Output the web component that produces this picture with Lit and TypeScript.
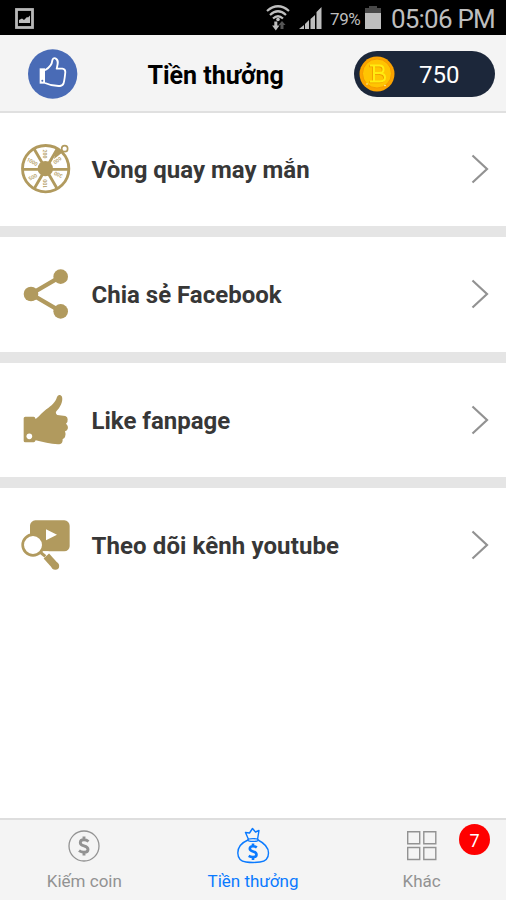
import { LitElement, html, svg, css } from "lit";
import { customElement } from "lit/decorators.js";

const GOLD = "#b19a5e";

const wheelIcon = html`<svg class="pic" viewBox="0 -1 240 240">
  <circle cx="107" cy="118" r="69.500" fill="none" stroke=${GOLD} stroke-width="8.500" />
  <path d="M37 120H176M72 58l70 121M142 58L72 179" stroke=${GOLD} stroke-width="8.500" />
  <circle cx="106" cy="118" r="23" fill=${GOLD} />
  <path d="M132 89l6-29 20 9z" fill=${GOLD} />
  <path d="M144 71l13-6" stroke=${GOLD} stroke-width="7" />
  <circle cx="164" cy="58" r="9" fill="#fff" stroke=${GOLD} stroke-width="5" />
  <g fill=${GOLD} font-family="Roboto, sans-serif" font-size="15.500" font-weight="500" text-anchor="middle">
    ${[
      ["200", 99, 74, 90],
      ["600", 139, 89, -215],
      ["300", 147, 131, 205],
      ["100", 112, 163, -90],
      ["500", 71, 148, -30],
      ["1000", 64, 102, 30],
    ].map(([t, x, y, r]) => svg`<text transform="translate(${x} ${y}) rotate(${r})">${t}</text>`)}
  </g>
</svg>`;

const shareIcon = html`<svg class="pic" viewBox="0 -1 240 240">
  <path d="M152 67L63 119l89 52" fill="none" stroke=${GOLD} stroke-width="13" />
  <g fill=${GOLD}>
    <circle cx="152" cy="67" r="22" />
    <circle cx="63" cy="119" r="22" />
    <circle cx="152" cy="171" r="22" />
  </g>
</svg>`;

const likeIcon = html`<svg class="pic" viewBox="0 0 240 240">
  <path
    fill=${GOLD}
    d="M46 110H71Q75 110 77 117C90 107 98 96 109 88C125 77 136 67 141 51C144 43 152 43 156 50C160 65 150 82 139 94C136 98 138 103 142 105L166 108Q173 110 173 118Q174 126 168 131Q176 138 173 147Q171 152 165 154Q169 164 165 171Q163 175 158 177Q159 191 148 193C124 194 99 186 77 181Q75 187 71 187H46Q41 187 41 182V115Q41 110 46 110Z"
  />
  <circle cx="58" cy="169" r="8.500" fill="#fff" />
</svg>`;

const watchIcon = html`<svg class="pic" viewBox="0 -1 240 240">
  <rect x="60" y="45" width="119" height="93" rx="16" fill=${GOLD} />
  <path d="M108 72v33l33-17z" fill="#fff" />
  <path d="M96 138h20v5h-20z" fill="#fff" />
  <path d="M109 152L136 182" stroke=${GOLD} stroke-width="22" />
  <circle cx="136" cy="182" r="11.500" fill=${GOLD} />
  <path d="M90 140l16 13" stroke=${GOLD} stroke-width="9" />
  <circle cx="69" cy="119" r="31" fill="#fff" stroke=${GOLD} stroke-width="8" />
</svg>`;

const ROWS = [
  { label: "Vòng quay may mắn", icon: wheelIcon },
  { label: "Chia sẻ Facebook", icon: shareIcon },
  { label: "Like fanpage", icon: likeIcon },
  { label: "Theo dõi kênh youtube", icon: watchIcon },
];

@customElement("app-root")
export class AppRoot extends LitElement {
  static styles = css`
    :host {
      display: flex;
      flex-direction: column;
      height: 900px;
      background: #fff;
      font-family: Roboto, sans-serif;
      overflow: hidden;
    }
    * { box-sizing: border-box; }
    svg { display: block; flex: none; }
    .status {
      height: 35px;
      flex: none;
      background: #000;
      color: #bebebe;
      display: flex;
      align-items: center;
    }
    .shot { margin-left: 15px; margin-top: 2px; }
    .wifi { margin-left: auto; }
    .signal { margin-left: 9px; }
    .pct { font-size: 17px; width: 31px; margin-left: 8px; margin-top: 3px; letter-spacing: -0.4px; white-space: nowrap; }
    .battery { margin-left: 4px; }
    .clock { font-size: 26px; line-height: 35px; width: 105px; margin-left: 10px; margin-right: 10px; margin-top: 4px; letter-spacing: -0.8px; white-space: nowrap; }
    .head {
      height: 78px;
      flex: none;
      background: #f4f4f4;
      border-bottom: 2px solid #e0e0e0;
      display: flex;
      align-items: center;
    }
    .thumb { margin-left: 28px; margin-top: 1px; }
    .title { margin: 5px 0 0 69.500px; width: 140px; font-size: 25px; font-weight: 700; color: #000; white-space: nowrap; }
    .pill {
      margin: 2px 11px 0 auto;
      width: 141px;
      height: 46px;
      border-radius: 23px;
      background: #1c273a;
      color: #fff;
      display: flex;
      align-items: center;
      padding-left: 5px;
      font-size: 24px;
    }
    .amount { margin-left: 24px; margin-top: 2px; }
    .list { flex: 1; }
    .row { height: 113.300px; display: flex; align-items: center; padding-left: 10px; }
    .row:first-child { padding-bottom: 1.300px; }
    .row + .row { border-top: 11.500px solid #e5e5e5; height: 125.300px; }
    .pic { width: 80px; height: 80px; }
    .label { margin: 2px 0 0 1.500px; flex: 1; font-size: 24px; font-weight: 700; color: #373737; white-space: nowrap; }
    .row:last-child .label { letter-spacing: 0.1px; }
    .chev { margin-right: 17px; }
    .tabs {
      height: 82px;
      flex: none;
      background: #f4f4f4;
      border-top: 2px solid #dedede;
      display: grid;
      grid-template-columns: 1fr 1fr 1fr;
      color: #929292;
      font-size: 17px;
    }
    .tab { display: flex; flex-direction: column; align-items: center; position: relative; padding-top: 6px; }
    .tab span { line-height: 20px; margin-top: 5px; white-space: nowrap; }
    .on { color: #0a7aff; }
    .badge {
      position: absolute;
      top: 4px;
      right: 16px;
      width: 31px;
      height: 31px;
      border-radius: 50%;
      background: #fe0000;
      color: #fff;
      font-size: 18px;
      line-height: 33px;
      text-align: center;
    }
  `;

  render() {
    return html`
      <div class="status">
        <svg class="shot" width="19" height="21" viewBox="0 0 19 21">
          <rect x="1.500" y="1.500" width="16" height="18" fill="none" stroke="#b8b8b8" stroke-width="2.800" />
          <path d="M4 15v-3l3-1.500 2 1.500 3-3 1 .5 2-2v7.500z" fill="#bebebe" />
        </svg>
        <svg class="wifi" width="24" height="28" viewBox="0 0 24 28">
          <g fill="none" stroke="#bebebe" stroke-width="2.200">
            <path d="M1 7Q12-2.500 23 7M4 11Q12 3.500 20 11M7 14.500Q12 10 17 14.500" />
          </g>
          <circle cx="12" cy="15.500" r="1.800" fill="#bebebe" />
          <path d="M8.300 17.500h3v4H13.500l-3.700 5-3.700-5h2.200z" fill="#bebebe" />
          <path d="M14.500 25h3v-4h2l-3.500-4-3.500 4h2z" fill="#555" />
        </svg>
        <svg class="signal" width="23" height="23" viewBox="0 0 23 23">
          <path d="M0 23l5-4v4zM6 23v-5l4-4v9zM11.500 23v-10l4.500-4v14zM17.500 23V6L22.500 1v22z" fill="#bebebe" />
        </svg>
        <div class="pct">79%</div>
        <svg class="battery" width="16" height="23" viewBox="0 0 16 23">
          <path d="M4 0h8v2h4v5H0V2h4z" fill="#484848" />
          <path d="M0 7h16v16H0z" fill="#bebebe" />
        </svg>
        <div class="clock">05:06 PM</div>
      </div>
      <div class="head">
        <svg class="thumb" width="50" height="50" viewBox="84 147 150 150">
          <circle cx="158" cy="222" r="74" fill="#496bb6" />
          <path
            d="M135 211C148 203 156 194 157 181Q159 173 166 175C178 180 173 194 170 206H187Q196 207 196 216Q194 238 191 249Q189 257 180 258Q156 259 135 249"
            fill="none" stroke="#fff" stroke-width="5.500" stroke-linejoin="round"
          />
          <path d="M119 205h16v46h-16z" fill="#fff" />
          <circle cx="127" cy="242" r="3" fill="#496bb6" />
        </svg>
        <div class="title">Tiền thưởng</div>
        <div class="pill">
          <svg width="36" height="36" viewBox="0 0 36 36">
            <circle cx="18" cy="18" r="17.500" fill="#fba300" />
            <circle cx="18" cy="17.500" r="14.500" fill="#ffc402" stroke="#f59a00" stroke-width="1" />
            <g fill="none" stroke-linejoin="round">
              <path transform="translate(-.8 .8)" d="M11 9.500H20.500Q24.500 9.500 24.500 13.500Q24.500 17 20.500 17H14.500M20.500 17Q26 17.500 26 21.500Q26 25.500 20.500 25.500H11M15 9.500V25.500" stroke="#f09a00" stroke-width="2" />
              <path d="M11 9.500H20.500Q24.500 9.500 24.500 13.500Q24.500 17 20.500 17H15M20.500 17Q26 17.500 26 21.500Q26 25.500 20.500 25.500H11M15 9.500V25.500" stroke="#ffec10" stroke-width="2" />
            </g>
            <circle cx="8" cy="28" r=".8" fill="#fff3b0" />
            <circle cx="26" cy="29.500" r=".8" fill="#fff3b0" />
          </svg>
          <span class="amount">750</span>
        </div>
      </div>
      <div class="list">
        ${ROWS.map(
          (r) => html`<div class="row">
            ${r.icon}
            <div class="label">${r.label}</div>
            <svg class="chev" width="18" height="30" viewBox="0 0 18 30">
              <path d="M1.500 1.500L16 15 1.500 28.500" fill="none" stroke="#929292" stroke-width="2.200" />
            </svg>
          </div>`
        )}
      </div>
      <div class="tabs">
        <div class="tab">
          <svg width="40" height="40" viewBox="0 0 40 40">
            <circle cx="20" cy="20" r="15" fill="none" stroke="#929292" stroke-width="1.300" />
            <path d="M24.500 15.500Q22.500 13.800 20 13.800Q16.300 13.800 16.300 16.700Q16.300 18.800 20 19.800Q24 20.800 24 23.400Q24 26.200 20 26.200Q17 26.200 15 24.700M20 10.500v3.500M20 26v3.500" fill="none" stroke="#929292" stroke-width="2.900" />
          </svg>
          <span>Kiếm coin</span>
        </div>
        <div class="tab on">
          <svg width="40" height="40" viewBox="0 0 40 40">
            <g fill="none" stroke="#0a7aff" stroke-width="1.400" stroke-linejoin="round">
              <path d="M15.500 13.500L12.500 6.500L16.500 7L19.500 2.500L22.500 6L26 4.500L24.500 13.500" />
              <ellipse cx="20" cy="14" rx="5.200" ry="1.400" />
              <path d="M15 14C8 17 4.800 21 4.800 27Q5 35 13 36Q20 37 27 36Q35.500 35 35.500 27C35.500 21 31 17 25 14" />
            </g>
            <path d="M23.800 21.500Q22.300 20.300 20 20.300Q16.800 20.300 16.800 22.800Q16.800 24.600 20 25.400Q23.500 26.300 23.500 28.700Q23.500 31 20 31Q17.500 31 15.700 29.900M20 17.500v3M20 31v3" fill="none" stroke="#0a7aff" stroke-width="2.600" />
          </svg>
          <span>Tiền thưởng</span>
        </div>
        <div class="tab">
          <svg width="40" height="40" viewBox="0 0 40 40">
            <path d="M5.700 5.700h12v12h-12zM21.800 5.700h12v12h-12zM5.700 21.500h12v12h-12zM21.800 21.500h12v12h-12z" fill="none" stroke="#929292" stroke-width="1.400" />
          </svg>
          <span>Khác</span>
          <div class="badge">7</div>
        </div>
      </div>
    `;
  }
}
